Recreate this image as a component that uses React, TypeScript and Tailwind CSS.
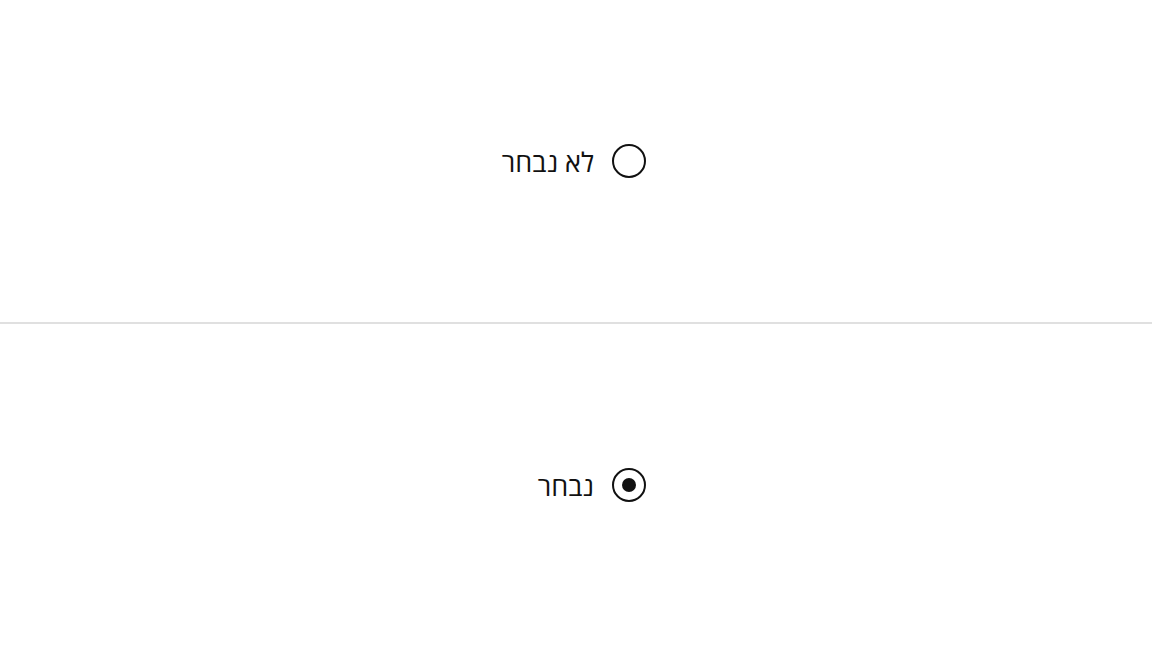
import React from "react";

function Radio({ checked, label }: { checked: boolean; label: string }) {
  return (
    <div className="flex items-center justify-center h-full">
      <div dir="rtl" className="w-[140px] flex items-center gap-[18px] overflow-visible">
        <span className="shrink-0 w-[34px] h-[34px] rounded-full border-[2px] border-[#111] flex items-center justify-center">
          {checked && <span className="w-[14px] h-[14px] rounded-full bg-[#111]" />}
        </span>
        <span className="whitespace-nowrap text-[27px] leading-none text-[#111]" style={{ fontFamily: '"Open Sans", "DejaVu Sans", sans-serif' }}>
          {label}
        </span>
      </div>
    </div>
  );
}

export default function App() {
  return (
    <div className="w-[1152px] h-[648px] bg-white flex flex-col">
      <div className="h-[322px]">
        <Radio checked={false} label="לא נבחר" />
      </div>
      <div className="h-[2px] bg-[#e0e0e0]" />
      <div className="h-[322px]">
        <Radio checked={true} label="נבחר" />
      </div>
    </div>
  );
}
